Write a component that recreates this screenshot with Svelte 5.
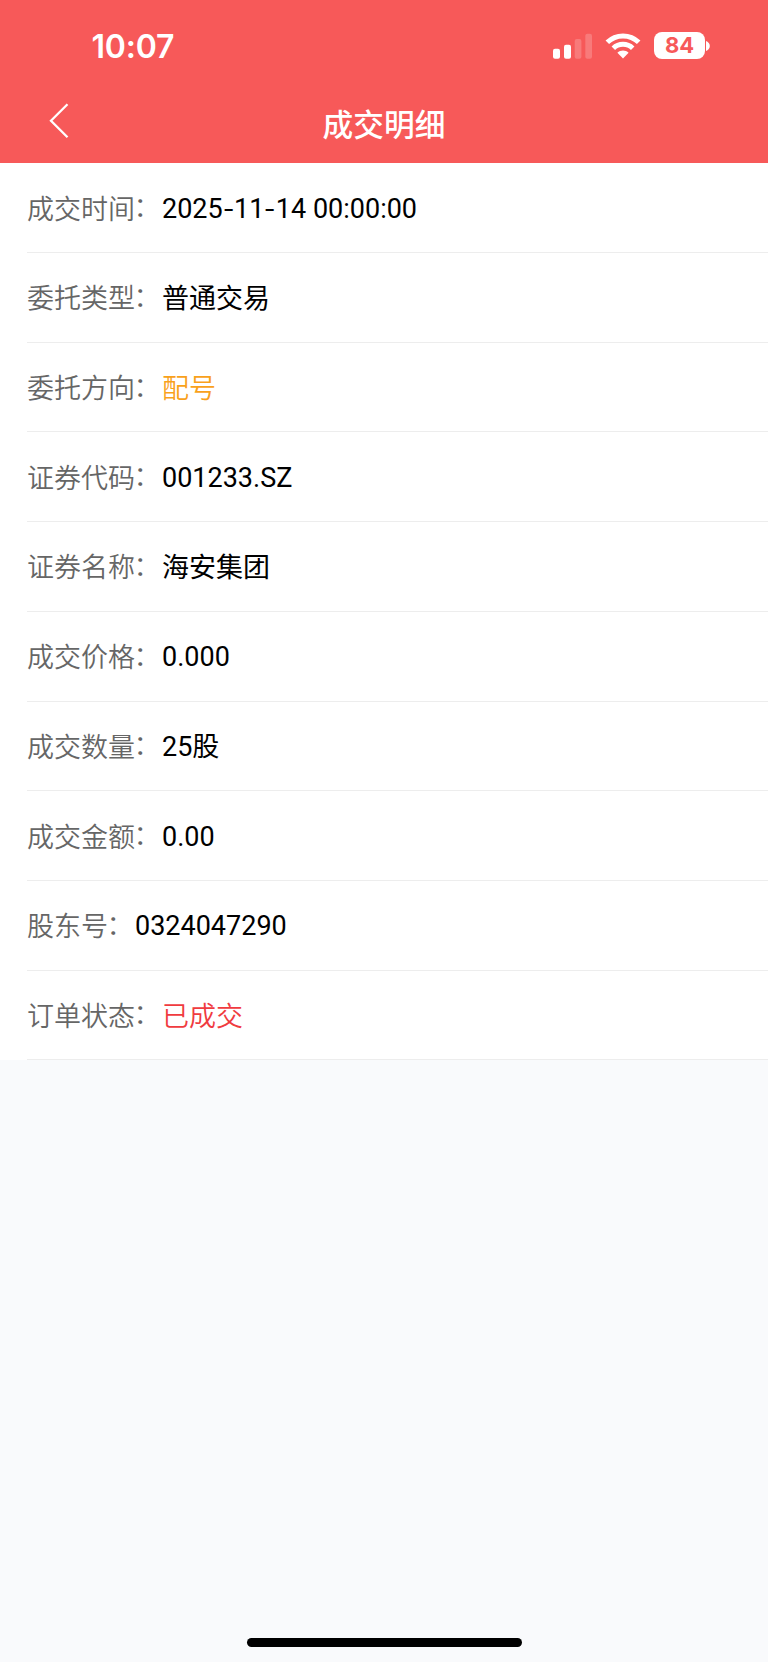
<script lang="ts">
    interface Row {
        label: string;
        value: string;
        tone?: 'orange' | 'red';
    }

    const rows: Row[] = [
        { label: '成交时间', value: '2025-11-14 00:00:00' },
        { label: '委托类型', value: '普通交易' },
        { label: '委托方向', value: '配号', tone: 'orange' },
        { label: '证券代码', value: '001233.SZ' },
        { label: '证券名称', value: '海安集团' },
        { label: '成交价格', value: '0.000' },
        { label: '成交数量', value: '25股' },
        { label: '成交金额', value: '0.00' },
        { label: '股东号', value: '0324047290' },
        { label: '订单状态', value: '已成交', tone: 'red' }
    ];

    const isNumeric = (value: string) => /^\d/.test(value);
</script>

<div class="screen">
    <header>
        <div class="status-bar">
            <span class="time">10:07</span>
            <div class="status-icons">
                <svg class="signal" width="40" height="26" viewBox="0 0 40 26" fill="#fff">
                    <rect x="0" y="15.7" width="7" height="10" rx="2" />
                    <rect x="11" y="11.7" width="7" height="14" rx="2" />
                    <rect x="21.7" y="6" width="6.7" height="19.7" rx="2" opacity="0.2" />
                    <rect x="32.3" y="0.8" width="6.7" height="24.9" rx="2" opacity="0.2" />
                </svg>
                <svg class="wifi" width="36" height="26" viewBox="0 0 36 26" fill="none" stroke="#fff" stroke-width="5">
                    <path d="M2.3 9.3C11 .8 25 .8 33.7 9.3" />
                    <path d="M8.3 15.2C13.7 10 22.3 10 27.7 15.2" />
                    <path d="M12.4 19.8C15.5 16.7 20.5 16.7 23.6 19.8L18 25.4Z" fill="#fff" stroke="none" />
                </svg>
                <div class="battery">84</div>
                <svg class="battery-cap" width="4" height="10" viewBox="0 0 4 10" fill="#fff">
                    <path d="M0 0C2.2.8 3.8 2.7 3.8 5S2.2 9.2 0 10Z" />
                </svg>
            </div>
        </div>
        <nav>
            <button class="back" aria-label="返回">
                <svg width="20" height="36" viewBox="0 0 20 36" fill="none" stroke="#fff" stroke-width="2.3">
                    <path d="M18.5 1.3L2 17.8L18.5 34.3" />
                </svg>
            </button>
            <h1>成交明细</h1>
        </nav>
    </header>

    <main>
        {#each rows as row}
            <div class="row">
                <span class="label">{row.label}<span class="colon">：</span></span>
                <span class="value {row.tone ?? ''}" class:numeric={isNumeric(row.value)}>
                    {#each row.value.split(/(-)/) as part}{#if part === '-'}<span class="dash">-</span>{:else}{part}{/if}{/each}
                </span>
            </div>
        {/each}
    </main>

    <div class="home-indicator"></div>
</div>

<style>
    :global(body) {
        margin: 0;
        background: #f9fafc;
    }

    .screen {
        display: flex;
        flex-direction: column;
        width: 768px;
        height: 1662px;
        background: #f9fafc;
        font-family: Roboto, 'Noto Sans CJK SC', sans-serif;
    }

    header {
        height: 163.4px;
        background: #f75959;
        color: #fff;
    }

    .status-bar {
        display: flex;
        align-items: center;
        justify-content: space-between;
        box-sizing: border-box;
        height: 92px;
        padding: 0 58px 0 91.5px;
    }

    .time {
        padding-top: 2px;
        font-family: Inter, sans-serif;
        font-size: 32px;
        font-weight: 600;
        letter-spacing: -0.2px;
        line-height: 40px;
    }

    .status-icons {
        display: flex;
        align-items: center;
        margin-top: -1px;
    }

    .wifi {
        margin-left: 12px;
    }

    .battery {
        width: 51px;
        height: 27px;
        margin-left: 13px;
        border-radius: 8px;
        background: #fff;
        color: #f75959;
        font-family: Inter, sans-serif;
        font-size: 22px;
        font-weight: 700;
        line-height: 27px;
        text-align: center;
    }

    .battery-cap {
        margin-left: 1px;
    }

    nav {
        display: grid;
        grid-template-columns: 90px 1fr 90px;
        align-items: center;
        height: 62px;
    }

    .back {
        display: flex;
        padding: 0 0 4px 49px;
        border: none;
        background: none;
        cursor: pointer;
    }

    h1 {
        margin: 0;
        padding-top: 5px;
        font-size: 30.7px;
        font-weight: 500;
        line-height: 44px;
        text-align: center;
    }

    main {
        background: #fff;
    }

    .row {
        display: flex;
        align-items: center;
        box-sizing: border-box;
        height: 89.7px;
        margin-left: 27px;
        padding-top: 4px;
        border-bottom: 1px solid #ededed;
        font-size: 27px;
        line-height: 40px;
        white-space: nowrap;
    }

    .label {
        color: #666;
        font-weight: 350;
    }

    .colon {
        position: relative;
        top: -1.5px;
        left: -1.5px;
    }

    .value {
        color: #000;
    }

    .value.numeric {
        padding-bottom: 2px;
    }

    .value.orange {
        color: #f9a11b;
        font-weight: 350;
    }

    .value.red {
        color: #f03b3f;
        font-weight: 350;
    }

    .dash {
        display: inline-block;
        width: 11.4px;
        text-align: center;
        transform: scaleX(1.25);
    }

    .home-indicator {
        width: 275px;
        height: 9px;
        margin: auto auto 15px;
        border-radius: 5px;
        background: #000;
    }
</style>
